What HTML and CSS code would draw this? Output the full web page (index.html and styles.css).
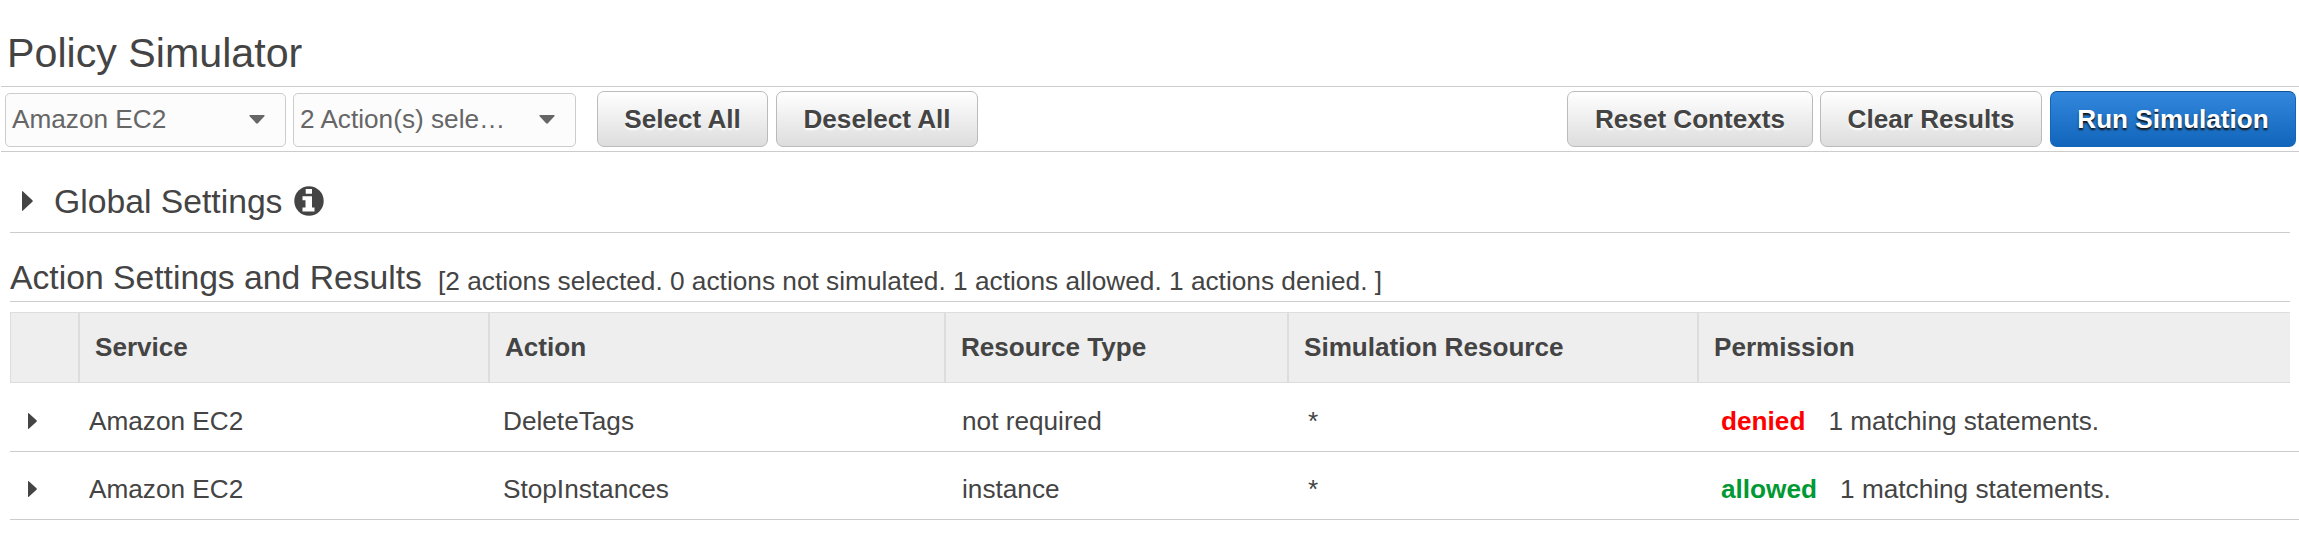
FILE: index.html
```html
<!DOCTYPE html>
<html lang="en">
<head>
<meta charset="utf-8">
<title>Policy Simulator</title>
<link rel="stylesheet" href="styles.css">
</head>
<body>
<h1 class="title">Policy Simulator</h1>
<div class="toolbar">
  <div class="select"><span>Amazon EC2</span><svg class="caret" viewBox="0 0 16 9"><path d="M1.200 0h13.600q1.600 0 .6 1.200l-6.500 7q-.9.9-1.800 0l-6.500-7q-1-1.200.6-1.200z"/></svg></div>
  <div class="select second"><span>2 Action(s) sele…</span><svg class="caret" viewBox="0 0 16 9"><path d="M1.200 0h13.600q1.600 0 .6 1.200l-6.500 7q-.9.9-1.800 0l-6.500-7q-1-1.200.6-1.200z"/></svg></div>
  <button class="btn select-all">Select All</button>
  <button class="btn deselect-all">Deselect All</button>
  <button class="btn reset">Reset Contexts</button>
  <button class="btn clear">Clear Results</button>
  <button class="btn run">Run Simulation</button>
</div>
<section class="global">
  <svg class="expander" viewBox="0 0 11 20"><path d="M0 1q0-1.500 1-.6l9.400 8.800q.7.800 0 1.600l-9.400 8.800q-1 .9-1-.6z"/></svg>
  <h2 class="heading">Global Settings</h2>
  <svg class="info" viewBox="0 0 30 30"><circle cx="15" cy="15" r="14.700"/><path fill="#fff" d="M11.700 3h6.300v4.800h-6.300zM8.500 10.300h9.500v11.200h2.500v4h-12v-4h3v-7.200h-3z"/></svg>
</section>
<section class="results-head">
  <h2 class="heading">Action Settings and Results</h2>
  <span class="summary">[2 actions selected. 0 actions not simulated. 1 actions allowed. 1 actions denied. ]</span>
</section>
<div class="table">
  <div class="row head">
    <div></div><div>Service</div><div>Action</div><div>Resource Type</div><div>Simulation Resource</div><div>Permission</div>
  </div>
  <div class="row data">
    <div><svg class="arrow" viewBox="0 0 9 16"><path d="M0 .6q0-1 .8-.3l7.700 7q.6.700 0 1.400l-7.700 7q-.8.700-.8-.3z"/></svg></div>
    <div>Amazon EC2</div><div>DeleteTags</div><div>not required</div><div>*</div>
    <div><b class="denied">denied</b><span>1 matching statements.</span></div>
  </div>
  <div class="row data">
    <div><svg class="arrow" viewBox="0 0 9 16"><path d="M0 .6q0-1 .8-.3l7.700 7q.6.700 0 1.400l-7.700 7q-.8.700-.8-.3z"/></svg></div>
    <div>Amazon EC2</div><div>StopInstances</div><div>instance</div><div>*</div>
    <div><b class="allowed">allowed</b><span>1 matching statements.</span></div>
  </div>
</div>
</body>
</html>
```

FILE: styles.css
```css
* { box-sizing: border-box; }
body {
  margin: 0;
  background: #fff;
  color: #444;
  font: 26.2px/30px "Liberation Sans", Arial, sans-serif;
  overflow: hidden;
}
svg { display: block; flex: none; fill: #444; }
.title {
  margin: 0;
  height: 86px;
  padding: 29px 0 0 7px;
  font-size: 41.2px;
  line-height: 48px;
  font-weight: 400;
}
.toolbar {
  display: flex;
  align-items: flex-start;
  height: 66px;
  margin-left: 1px;
  padding: 4px 3px 0 4px;
  border-top: 1px solid #ccc;
  border-bottom: 1px solid #ccc;
}
.select {
  display: flex;
  align-items: center;
  justify-content: space-between;
  width: 281px;
  height: 54px;
  margin-top: 2px;
  padding: 0 20px 2px 6px;
  border: 1px solid #ccc;
  border-radius: 5px;
  background: #fcfcfc;
  color: #666;
  white-space: nowrap;
}
.second { width: 283px; margin-left: 7px; }
.caret { width: 16px; height: 9px; fill: #666; }
.btn {
  height: 56px;
  padding: 0 0 1px;
  border: 1px solid #bbb;
  border-radius: 7px;
  background: linear-gradient(#fff, #ddd);
  color: #444;
  font: bold 26.1px/30px "Liberation Sans", Arial, sans-serif;
  text-shadow: 0 2px 2px #fff;
  white-space: nowrap;
}
.select-all { width: 171px; margin-left: 21px; }
.deselect-all { width: 202px; margin-left: 8px; }
.reset { width: 246px; margin-left: auto; }
.clear { width: 222px; margin-left: 7px; }
.run {
  width: 246px;
  margin-left: 8px;
  border-color: #0f5296 #1166bb #1166bb;
  background: linear-gradient(#3388dd, #1166bb);
  color: #fff;
  text-shadow: 0 2px 2px #111;
}
.heading { margin: 0; font-size: 33.7px; line-height: 40px; font-weight: 400; white-space: nowrap; }
.global {
  display: flex;
  align-items: center;
  height: 81px;
  margin: 0 9px 0 10px;
  padding: 17px 0 0 12px;
  border-bottom: 1px solid #ccc;
}
.expander { width: 11px; height: 20px; }
.global .heading { margin: 0 12px 0 21px; }
.info { width: 30px; height: 30px; }
.results-head {
  display: flex;
  align-items: flex-start;
  height: 69px;
  margin: 0 9px 0 10px;
  padding-top: 24px;
  border-bottom: 1px solid #ccc;
}
.summary { margin: 9px 0 0 16px; font-size: 26.25px; white-space: nowrap; }
.table { margin: 10px 0 0 10px; }
.row { display: grid; align-items: center; white-space: nowrap; }
.head {
  grid-template-columns: 69px 410px 456px 343px 410px 1fr;
  height: 71px;
  margin-right: 9px;
  border: 1px solid #ddd;
  border-right: 0;
  background: #eee;
  font-size: 26.1px;
  font-weight: bold;
}
.head > div { display: flex; align-items: center; height: 100%; padding: 0 0 1px 15px; border-right: 2px solid #ddd; }
.head > div:last-child { border-right: 0; }
.data {
  grid-template-columns: 79px 414px 459px 346px 413px 1fr;
  height: 68px;
  padding-top: 6px;
  border-bottom: 1px solid #ccc;
}
.head + .data { height: 69px; padding-top: 7px; }
.arrow { width: 9px; height: 16px; margin-left: 18px; }
.denied { color: #f00; margin-right: 23px; }
.allowed { color: #093; margin-right: 23px; }
```
